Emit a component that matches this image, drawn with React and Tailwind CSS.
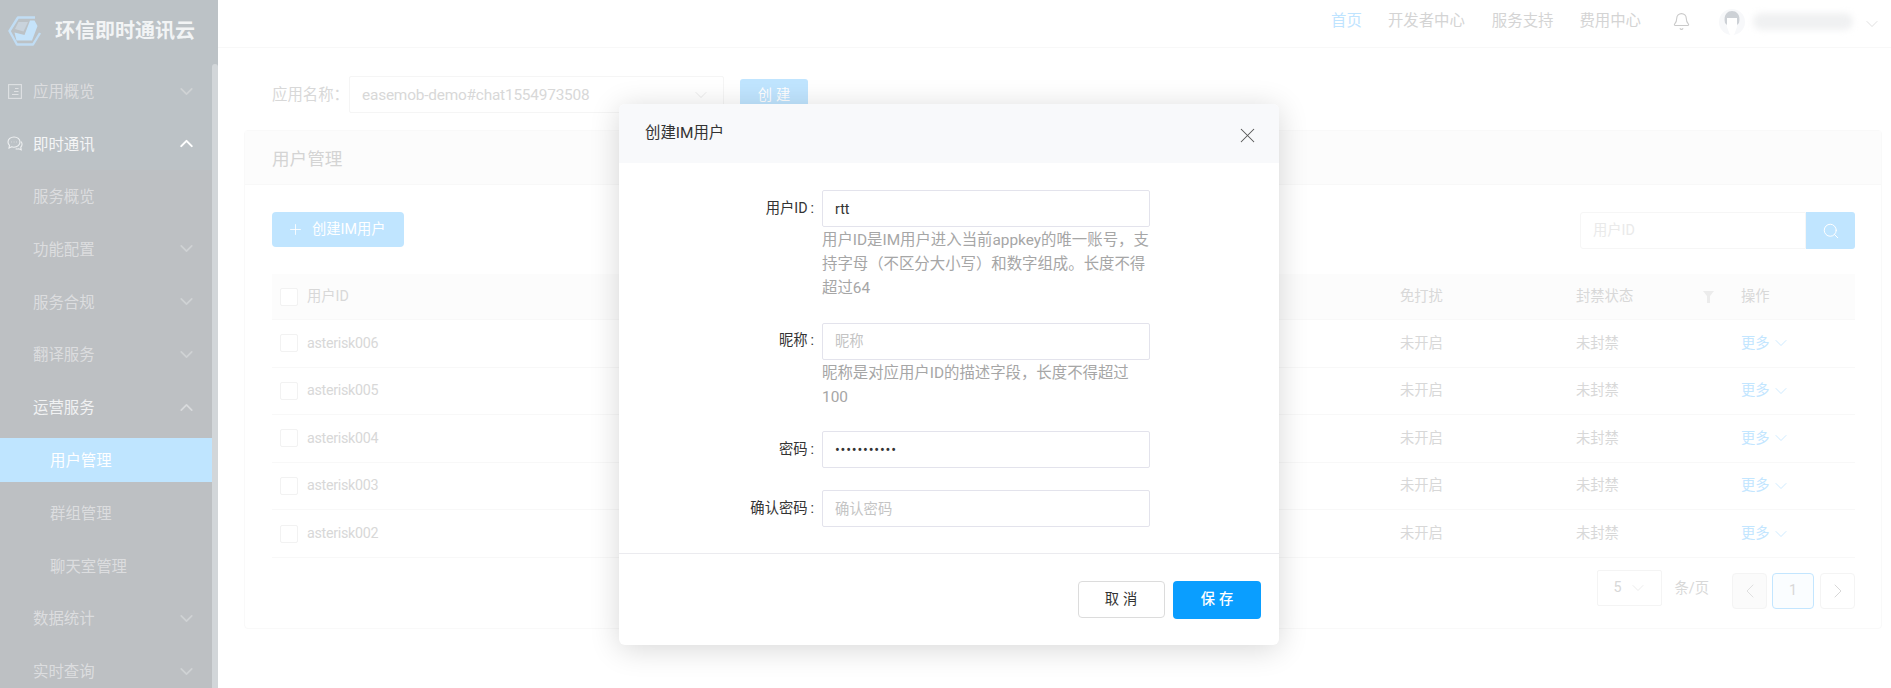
import React from 'react';
import { Bell, ChevronDown, ChevronLeft, ChevronRight, ChevronUp, Plus, Search, X } from 'lucide-react';

const topMenu = [
  { label: '服务概览' },
  { label: '功能配置', arrow: 'down' },
  { label: '服务合规', arrow: 'down' },
  { label: '翻译服务', arrow: 'down' },
  { label: '运营服务', arrow: 'up', open: true },
  { label: '用户管理', sub: true, active: true },
  { label: '群组管理', sub: true },
  { label: '聊天室管理', sub: true },
  { label: '数据统计', arrow: 'down' },
  { label: '实时查询', arrow: 'down' },
];

const users = ['asterisk006', 'asterisk005', 'asterisk004', 'asterisk003', 'asterisk002'];

function Logo() {
  return (
    <svg width="34" height="30" viewBox="0 0 34 30" fill="none" className="shrink-0">
      <path d="M27 1.5H10L1.5 15L9 28.5H25L32 17" stroke="#c1ddf4" strokeWidth="2.4" strokeLinejoin="round" />
      <path d="M10.5 6H20L15.5 15.5L7 13Z" fill="#c9d3dc" />
      <path d="M22 4.5H26.5L29.5 10L24 24.5H8.5L6.5 16.5L16.5 19Z" fill="#c5e3fa" />
    </svg>
  );
}

function AppIcon() {
  return (
    <svg width="14" height="15" viewBox="0 0 14 15" fill="none" stroke="#dfe1e3" strokeWidth="1.1" className="shrink-0">
      <rect x="0.6" y="0.6" width="12.8" height="13.8" />
      <path d="M7 4.5H10.5M6 7.5H10.5M4 10.5H10.5" />
    </svg>
  );
}

function ChatIcon() {
  return (
    <svg width="16" height="16" viewBox="0 0 16 16" fill="none" stroke="#eef0f1" strokeWidth="1.1" className="shrink-0">
      <path d="M7 1C3.6 1 1 3.2 1 6c0 1.3.6 2.5 1.5 3.4L2 12l2.6-1.2c.8.3 1.6.4 2.4.4 3.4 0 6-2.3 6-5.2S10.4 1 7 1Z" />
      <path d="M14 5.5c.8.9 1.2 2 1 3.2-.1 1-.6 1.8-1.2 2.5l.4 2.6-2.5-1c-1 .3-2 .3-3 .1" />
      <path d="M4.5 6H5M6.8 6H7.3M9 6H9.5" />
    </svg>
  );
}

function MenuRow({ item }) {
  let textColor = 'text-[#dcdddf]';
  if (item.open) textColor = 'text-[#f1f2f3]';
  if (item.active) textColor = 'text-white';
  return (
    <div
      className={`h-[44px] mb-[8.8px] flex items-center justify-between pr-[15px] text-[15.4px] ${textColor} ${
        item.sub ? 'pl-[50px]' : 'pl-[33px]'
      } ${item.active ? 'bg-[#bfe5ff]' : ''}`}
    >
      <span className="pt-[3px]">{item.label}</span>
      {item.arrow === 'down' && <ChevronDown size={21} strokeWidth={2} className="text-[#cfd2d4]" />}
      {item.arrow === 'up' && <ChevronUp size={21} strokeWidth={2} className="text-[#d8dadc]" />}
    </div>
  );
}

function Sidebar() {
  return (
    <aside className="w-[218px] shrink-0 h-full bg-[#bcc2c6] overflow-hidden">
      <div className="h-[64px] flex items-center pl-[8px] pb-[3px]">
        <Logo />
        <span className="ml-[13px] text-[20px] font-bold text-[#f2f4f5] whitespace-nowrap">环信即时通讯云</span>
      </div>
      <div className="flex">
        <nav className="w-[212px] shrink-0">
          <div className="pt-[5px] h-[106px]">
            <div className="h-[44px] mb-[8.8px] flex items-center pl-[8px] pr-[15px] text-[15.4px] text-[#dcdddf]">
              <AppIcon />
              <span className="ml-[11px] flex-1 pt-[3px]">应用概览</span>
              <ChevronDown size={21} strokeWidth={2} className="text-[#cfd2d4]" />
            </div>
            <div className="h-[44px] flex items-center pl-[7px] pr-[15px] text-[15.4px] text-[#f4f5f6]">
              <ChatIcon />
              <span className="ml-[10px] flex-1 pt-[3px]">即时通讯</span>
              <ChevronUp size={21} strokeWidth={2.4} className="text-white" />
            </div>
          </div>
          <div className="bg-[#bdc0c3] pt-[4px]">
            {topMenu.map((item) => (
              <MenuRow key={item.label} item={item} />
            ))}
          </div>
        </nav>
        <div className="w-[6px] h-[700px] rounded-t-[4px] bg-[#d2d6d9]" />
      </div>
    </aside>
  );
}

function Topbar() {
  return (
    <header className="h-[48px] border-b border-[#f8f8f8] flex items-center justify-end pr-[9px] pb-[4px] text-[15.4px] text-[#d4d4d4] whitespace-nowrap">
      <span className="text-[#bfe4ff]">首页</span>
      <span className="ml-[26px]">开发者中心</span>
      <span className="ml-[27px]">服务支持</span>
      <span className="ml-[26px]">费用中心</span>
      <Bell size={19} strokeWidth={1.4} className="ml-[31px] text-[#cacaca]" />
      <div className="ml-[28px] w-[26px] h-[26px] rounded-full bg-[#f7f8fa] overflow-hidden flex justify-center">
        <svg width="18" height="26" viewBox="0 0 18 26">
          <path d="M2 14C0 5 5 2 9 2s9 3 7 12l-2 2V9H4v7Z" fill="#cdd1d6" />
          <path d="M4 9h10v9l-3 8H7l-3-8Z" fill="#ffffff" />
        </svg>
      </div>
      <div className="ml-[8px] w-[100px] h-[17px] rounded-full bg-[#f0f1f2] blur-[3px]" />
      <ChevronDown size={20} strokeWidth={1} className="ml-[9px] mt-[4px] text-[#d8d8d8]" />
    </header>
  );
}

function Checkbox() {
  return <div className="w-[18px] h-[18px] rounded-[2px] border border-[#f2f2f2] bg-white shrink-0" />;
}

function UserTable() {
  return (
    <div className="mt-[25px] text-[14.3px] text-[#d8d8d8]">
      <div className="h-[46px] bg-[#fcfcfc] grid grid-cols-[1128px_176px_165px_114px] items-center border-b border-[#f8f8f8]">
        <div className="flex items-center pl-[8px]">
          <Checkbox />
          <span className="ml-[9px]">用户ID</span>
        </div>
        <div>免打扰</div>
        <div className="flex items-center justify-between pr-[27px]">
          <span>封禁状态</span>
          <svg width="11" height="12" viewBox="0 0 11 12" fill="#ececec">
            <path d="M0 0H11L7 5V12H4V5Z" />
          </svg>
        </div>
        <div>操作</div>
      </div>
      {users.map((name) => (
        <div
          key={name}
          className="h-[47.6px] grid grid-cols-[1128px_176px_165px_114px] items-center border-b border-[#f8f8f8]"
        >
          <div className="flex items-center pl-[8px]">
            <Checkbox />
            <span className="ml-[9px] tracking-[-0.3px]">{name}</span>
          </div>
          <div>未开启</div>
          <div>未封禁</div>
          <div className="flex items-center text-[#c3e6ff]">
            <span>更多</span>
            <ChevronDown size={20} strokeWidth={1} className="ml-[1px]" />
          </div>
        </div>
      ))}
    </div>
  );
}

function Pagination() {
  return (
    <div className="mt-[12px] flex items-start justify-end text-[14.3px] text-[#d8d8d8]">
      <div className="w-[65px] h-[36px] border border-[#f4f4f4] rounded-[2px] flex items-center justify-center gap-[6px] pl-[3px]">
        <span>5</span>
        <ChevronDown size={20} strokeWidth={1} className="text-[#e8e8e8]" />
      </div>
      <span className="ml-[13px] mt-[8px]">条/页</span>
      <div className="ml-[23px] mt-[3px] w-[35px] h-[36px] border border-[#f4f4f4] bg-[#fbfbfb] rounded-[4px] flex items-center justify-center">
        <ChevronLeft size={24} strokeWidth={1} className="text-[#e0e0e0]" />
      </div>
      <div className="ml-[5px] mt-[3px] w-[42px] h-[36px] border border-[#c3e6ff] bg-[#fafdff] rounded-[4px] flex items-center justify-center">
        1
      </div>
      <div className="ml-[6px] mt-[3px] w-[35px] h-[36px] border border-[#f4f4f4] rounded-[4px] flex items-center justify-center">
        <ChevronRight size={24} strokeWidth={1} className="text-[#d8d8d8]" />
      </div>
    </div>
  );
}

function FormItem({ label, help, children }) {
  return (
    <div className="flex mb-[22px]">
      <label className="w-[195px] h-[37px] shrink-0 flex items-center justify-end text-[14.3px] text-[#333]">
        {label}
        <span className="ml-[3px]">:</span>
      </label>
      <div className="ml-[8px] w-[328px]">
        {children}
        {help && <p className="mt-[1px] text-[15.4px] leading-[24.2px] text-[#a6a6a6]">{help}</p>}
      </div>
    </div>
  );
}

function TextInput({ className = '', ...props }) {
  return (
    <input
      readOnly
      {...props}
      className={`block w-full h-[37px] px-[12px] rounded-[2px] border border-[#e3e3ec] bg-white text-[14.3px] text-[#333] placeholder:text-[#c4c4c4] outline-none ${className}`}
    />
  );
}

function CreateUserModal() {
  return (
    <div className="absolute left-[619px] top-[104px] w-[660px] h-[541px] rounded-[6px] bg-white shadow-[0_4px_30px_rgba(0,0,0,0.16)] overflow-hidden">
      <div className="h-[59px] bg-[#f8f9fb] pl-[26px] pr-[19px] flex items-center justify-between">
        <span className="text-[15.4px] text-[#333]">创建IM用户</span>
        <X size={25} strokeWidth={1} className="mt-[4px] text-[#555]" />
      </div>
      <div className="pt-[27px] h-[391px] border-b border-[#ebebef]">
        <FormItem label="用户ID" help="用户ID是IM用户进入当前appkey的唯一账号，支持字母（不区分大小写）和数字组成。长度不得超过64">
          <TextInput defaultValue="rtt" />
        </FormItem>
        <FormItem label="昵称" help="昵称是对应用户ID的描述字段，长度不得超过100">
          <TextInput placeholder="昵称" />
        </FormItem>
        <FormItem label="密码">
          <TextInput type="password" defaultValue="12345678901" className="tracking-[0.8px]" />
        </FormItem>
        <FormItem label="确认密码">
          <TextInput placeholder="确认密码" />
        </FormItem>
      </div>
      <div className="pt-[27px] pr-[18px] flex justify-end items-start gap-[8.5px]">
        <button className="w-[87px] h-[37px] rounded-[4px] border border-[#dcdcdc] bg-white text-[14.3px] text-[#333] tracking-[4px] pl-[4px]">
          取消
        </button>
        <button className="w-[88px] h-[38px] rounded-[4px] bg-[#0a9eff] text-[14.3px] font-medium text-white tracking-[4px] pl-[4px]">
          保存
        </button>
      </div>
    </div>
  );
}

export default function App() {
  return (
    <div className="relative w-[1891px] h-[688px] overflow-hidden flex bg-white font-['Roboto','Noto_Sans_CJK_SC',sans-serif]">
      <Sidebar />
      <main className="flex-1 min-w-0">
        <Topbar />
        <div className="pt-[28px] pl-[54px] flex items-start text-[#d8d8d8]">
          <span className="w-[77px] h-[37px] pt-[3px] flex items-center text-[15.4px]">应用名称：</span>
          <div className="w-[375px] h-[37px] border border-[#f5f5f5] rounded-[2px] flex items-center justify-between pl-[12px] pr-[12px] text-[15.4px] tracking-[-0.2px]">
            <span className="pt-[2px]">easemob-demo#chat1554973508</span>
            <ChevronDown size={20} strokeWidth={1} className="text-[#e6e6e6]" />
          </div>
          <button className="ml-[16px] mt-[3px] w-[68px] h-[34px] rounded-[3px] bg-[#c0e5ff] text-[14.3px] text-white tracking-[4px] pl-[4px]">
            创建
          </button>
        </div>
        <section className="mt-[17px] ml-[26px] w-[1638px] h-[499px] border border-[#f9f9f9] rounded-[4px]">
          <div className="h-[54px] bg-[#fcfcfc] border-b border-[#f8f8f8] pl-[27px] pt-[3px] flex items-center text-[17.6px] text-[#d4d4d4]">
            用户管理
          </div>
          <div className="pl-[27px] pr-[26px] pt-[27px]">
            <div className="flex items-start justify-between">
              <button className="w-[132px] h-[35px] rounded-[4px] bg-[#c0e5ff] flex items-center pl-[15px] text-[14.3px] text-white">
                <Plus size={17} strokeWidth={1.2} />
                <span className="ml-[8px]">创建IM用户</span>
              </button>
              <div className="flex h-[37px]">
                <div className="w-[226px] border border-[#f6f6f6] rounded-l-[3px] flex items-center pl-[12px] text-[14.3px] text-[#eaeaea]">
                  用户ID
                </div>
                <div className="w-[49px] rounded-r-[3px] bg-[#c0e5ff] flex items-center justify-center">
                  <Search size={18} strokeWidth={1.3} className="text-white" />
                </div>
              </div>
            </div>
            <UserTable />
            <Pagination />
          </div>
        </section>
      </main>
      <CreateUserModal />
    </div>
  );
}
